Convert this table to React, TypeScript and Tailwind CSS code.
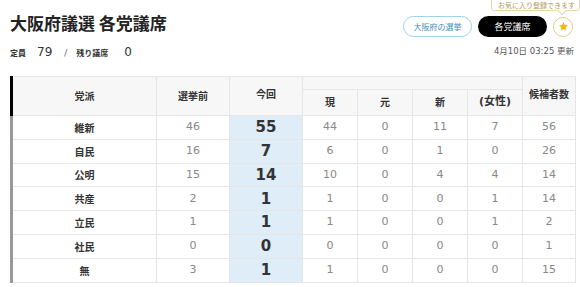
const rows = [
  { name: "維新", before: 46, now: 55, cur: 44, former: 0, fresh: 11, women: 7, cand: 56 },
  { name: "自民", before: 16, now: 7, cur: 6, former: 0, fresh: 1, women: 0, cand: 26 },
  { name: "公明", before: 15, now: 14, cur: 10, former: 0, fresh: 4, women: 4, cand: 14 },
  { name: "共産", before: 2, now: 1, cur: 1, former: 0, fresh: 0, women: 1, cand: 14 },
  { name: "立民", before: 1, now: 1, cur: 1, former: 0, fresh: 0, women: 1, cand: 2 },
  { name: "社民", before: 0, now: 0, cur: 0, former: 0, fresh: 0, women: 0, cand: 1 },
  { name: "無", before: 3, now: 1, cur: 1, former: 0, fresh: 0, women: 0, cand: 15 },
];

const font = "font-['DejaVu_Sans','Noto_Sans_CJK_JP',sans-serif]";
const jp = "font-['Noto_Sans_CJK_JP',sans-serif]";
const thBase = "border border-[#e6e6e6] bg-[#f7f7f7] font-bold text-[#333] text-center";
const th = `${thBase} text-[10px]`;
const cell = "border border-[#e6e6e6] text-center h-[23.8px] p-0";
const td = `${cell} text-[11px] text-[#888]`;

function Star() {
  return (
    <svg width="11" height="11" viewBox="0 0 24 24">
      <path
        d="M12 2l2.9 6.6 7.1.6-5.4 4.7 1.6 7-6.2-3.7-6.2 3.7 1.6-7L2 9.2l7.1-.6z"
        fill="#f2b705"
      />
    </svg>
  );
}

export default function App() {
  return (
    <div className={`w-[580px] h-[287px] bg-white overflow-hidden relative ${font}`}>
      <div className={`absolute right-0 top-[-1px] border border-[#e8d8a8] bg-white rounded-b-[3px] pl-[6px] pr-[4px] h-[12px] leading-[10px] text-[7px] text-[#b39a5c] whitespace-nowrap ${jp}`}>
        お気に入り登録できます
        <span className="absolute right-[14px] bottom-[-4px] w-[6px] h-[6px] bg-white border-r border-b border-[#e8d8a8] rotate-45" />
      </div>

      <div className="flex items-start justify-between pl-[10px] pr-[7px] pt-[12px]">
        <div>
          <h1 className={`text-[17px] font-bold text-[#222] leading-[22px] ${jp}`}>
            大阪府議選 各党議席
          </h1>
          <div className="flex items-baseline mt-[9px] text-[#333]">
            <span className={`text-[8px] font-bold ${jp}`}>定員</span>
            <span className="text-[12px] ml-[11px]">79</span>
            <span className="text-[9px] ml-[12px] text-[#666]">/</span>
            <span className={`text-[8px] font-bold ml-[9px] ${jp}`}>残り議席</span>
            <span className="text-[12px] ml-[16px]">0</span>
          </div>
        </div>
        <div className="flex flex-col items-end">
          <div className="flex items-center gap-[6px] mt-[4px]">
            <div className={`w-[69px] h-[21px] rounded-full border border-[#9fd2e6] text-[#3f8fb8] text-[8px] flex items-center justify-center ${jp}`}>
              大阪府の選挙
            </div>
            <div className={`w-[69px] h-[21px] rounded-full bg-black text-white text-[9px] flex items-center justify-center ${jp}`}>
              各党議席
            </div>
            <div className="w-[20px] h-[20px] rounded-full border border-[#e2cd85] flex items-center justify-center">
              <Star />
            </div>
          </div>
          <div className="text-[8.5px] text-[#555] mt-[8px] mr-[-1px]">4月10日 03:25 更新</div>
        </div>
      </div>

      <table className="mt-[15px] ml-[10px] w-[564px] table-fixed border-collapse">
        <colgroup>
          <col className="w-[145px]" />
          <col className="w-[73px]" />
          <col className="w-[73px]" />
          <col className="w-[55px]" />
          <col className="w-[55px]" />
          <col className="w-[55px]" />
          <col className="w-[55px]" />
          <col className="w-[53px]" />
        </colgroup>
        <thead>
          <tr className="h-[13px]">
            <th rowSpan={2} className={`${th} border-l-[3px] border-l-black`}>党派</th>
            <th rowSpan={2} className={th}>選挙前</th>
            <th rowSpan={2} className={`${th} pb-[4px]`}>今回</th>
            <th colSpan={4} className="bg-[#f7f7f7] border-t border-[#e6e6e6] p-0" />
            <th rowSpan={2} className={`${th} pb-[3px]`}>候補者数</th>
          </tr>
          <tr className="h-[26px]">
            <th className={th}>現</th>
            <th className={th}>元</th>
            <th className={th}>新</th>
            <th className={`${thBase} text-[11px]`}>(女性)</th>
          </tr>
        </thead>
        <tbody>
          {rows.map((r) => (
            <tr key={r.name}>
              <td className={`${cell} border-l-[3px] border-l-[#999] text-[10px] font-bold text-[#333] ${jp}`}>
                {r.name}
              </td>
              <td className={td}>{r.before}</td>
              <td className={`${cell} bg-[#deedf8] text-[15px] font-bold text-[#333]`}>{r.now}</td>
              <td className={td}>{r.cur}</td>
              <td className={td}>{r.former}</td>
              <td className={td}>{r.fresh}</td>
              <td className={td}>{r.women}</td>
              <td className={td}>{r.cand}</td>
            </tr>
          ))}
        </tbody>
      </table>
    </div>
  );
}
